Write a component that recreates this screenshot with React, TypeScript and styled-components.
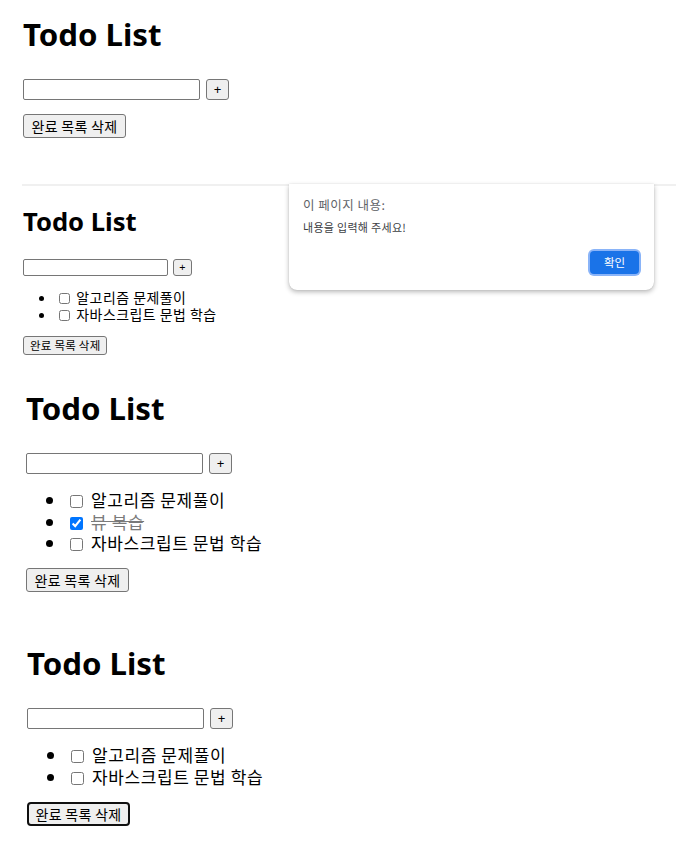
import React from "react";
import styled, { createGlobalStyle, css } from "styled-components";

const Global = createGlobalStyle`
  html, body { margin: 0; padding: 0; background: #ffffff; }
  body {
    font-family: "Noto Sans", "Noto Sans CJK KR", sans-serif;
    color: #000000;
    width: 676px;
    height: 844px;
    overflow: hidden;
  }
`;

type Scaled = { $s: number };
const px = (v: number, s: number) => `${(v * s).toFixed(2)}px`;

const Page = styled.div`
  display: flex;
  flex-direction: column;
  width: 676px;
  height: 844px;
  overflow: hidden;
`;

const Shot = styled.section<{ $h: number; $pt: number; $pl: number; $line?: boolean }>`
  position: relative;
  flex: none;
  box-sizing: border-box;
  height: ${(p) => p.$h}px;
  padding: ${(p) => p.$pt}px 0 0 ${(p) => p.$pl}px;
  ${(p) =>
    p.$line &&
    css`
      margin-left: 22px;
      border-top: 2px solid #f0f0f0;
    `}
`;

const Title = styled.h1<Scaled>`
  margin: 0;
  font-family: "Noto Sans", "Noto Sans CJK KR", sans-serif;
  font-weight: 700;
  font-size: ${(p) => px(31.2, p.$s)};
  line-height: ${(p) => px(40, p.$s)};
  color: #000000;
`;

const FormRow = styled.div<Scaled>`
  display: flex;
  align-items: center;
  gap: ${(p) => px(6, p.$s)};
  margin-top: ${(p) => px(25.4, p.$s)};
  height: ${(p) => px(21, p.$s)};
`;

const TextInput = styled.input<Scaled>`
  box-sizing: border-box;
  width: ${(p) => px(177, p.$s)};
  height: ${(p) => px(21, p.$s)};
  margin: 0;
  padding: 0 2px;
  border: 1px solid #767676;
  border-radius: 2px;
  background: #ffffff;
  outline: none;
`;

const buttonBase = css`
  box-sizing: border-box;
  margin: 0;
  padding: 0;
  border: 1px solid #767676;
  border-radius: 3px;
  background: #efefef;
  color: #000000;
  font-family: "Noto Sans", "Noto Sans CJK KR", sans-serif;
  cursor: default;
`;

const AddButton = styled.button<Scaled>`
  ${buttonBase};
  width: ${(p) => px(23, p.$s)};
  height: ${(p) => px(21, p.$s)};
  font-size: ${(p) => px(13.33, p.$s)};
  line-height: 1;
`;

const List = styled.ul<Scaled>`
  margin: ${(p) => px(15.2, p.$s)} 0 0 0;
  padding-left: ${(p) => px(40, p.$s)};
  list-style: disc;
  font-family: "Noto Sans CJK KR", sans-serif;
  font-size: ${(p) => px(17, p.$s)};
  letter-spacing: ${(p) => px(0.6, p.$s)};
  line-height: ${(p) => px(21.5, p.$s)};
`;

const Item = styled.li`
  white-space: nowrap;
`;

const Check = styled.input<Scaled>`
  width: ${(p) => px(13, p.$s)};
  height: ${(p) => px(13, p.$s)};
  margin: 0 ${(p) => px(8, p.$s)} 0 ${(p) => px(4, p.$s)};
  vertical-align: ${(p) => px(-1, p.$s)};
  accent-color: #0075ff;
`;

const ItemText = styled.span<{ $done?: boolean }>`
  color: ${(p) => (p.$done ? "#7a7a7a" : "#000000")};
  text-decoration: ${(p) => (p.$done ? "line-through" : "none")};
`;

const DeleteButton = styled.button<Scaled & { $focused?: boolean }>`
  ${buttonBase};
  display: block;
  margin-top: ${(p) => px(14.4, p.$s)};
  width: ${(p) => px(103, p.$s)};
  height: ${(p) => px(24, p.$s)};
  font-family: "Noto Sans CJK KR", sans-serif;
  font-size: ${(p) => px(14, p.$s)};
  letter-spacing: ${(p) => px(0.3, p.$s)};
  line-height: 1;
  ${(p) =>
    p.$focused &&
    css`
      border: 2px solid #101010;
      border-radius: 4px;
    `}
`;

const Dialog = styled.div`
  position: absolute;
  top: -2px;
  left: 267px;
  width: 365px;
  height: 106px;
  box-sizing: border-box;
  display: flex;
  flex-direction: column;
  padding: 12px 13px 14px 14px;
  background: #ffffff;
  border-radius: 0 0 8px 8px;
  box-shadow: 0 2px 5px rgba(0, 0, 0, 0.28), 0 0 1px rgba(0, 0, 0, 0.2);
  font-family: "Noto Sans CJK KR", sans-serif;
`;

const DialogTitle = styled.div`
  font-size: 12.5px;
  letter-spacing: 0.5px;
  line-height: 17px;
  color: #5f6368;
`;

const DialogMessage = styled.div`
  margin-top: 7px;
  font-size: 11px;
  letter-spacing: 0.3px;
  line-height: 15px;
  color: #3c4043;
`;

const OkButton = styled.button`
  align-self: flex-end;
  margin: auto 2px 2px 0;
  box-sizing: border-box;
  width: 49px;
  height: 23px;
  padding: 0;
  border: none;
  border-radius: 4px;
  background: #1a73e8;
  box-shadow: 0 0 0 2px #8ab4f8;
  color: #ffffff;
  font-family: "Noto Sans CJK KR", sans-serif;
  font-size: 11.5px;
  line-height: 1;
`;

type Todo = { text: string; done?: boolean };

function TodoApp({ s, items, focused }: { s: number; items?: Todo[]; focused?: boolean }) {
  return (
    <>
      <Title $s={s}>Todo List</Title>
      <FormRow $s={s}>
        <TextInput $s={s} type="text" defaultValue="" />
        <AddButton $s={s}>+</AddButton>
      </FormRow>
      {items && items.length > 0 && (
        <List $s={s}>
          {items.map((t) => (
            <Item key={t.text}>
              <Check $s={s} type="checkbox" defaultChecked={!!t.done} />
              <ItemText $done={t.done}>{t.text}</ItemText>
            </Item>
          ))}
        </List>
      )}
      <DeleteButton $s={s} $focused={focused}>
        완료 목록 삭제
      </DeleteButton>
    </>
  );
}

const twoItems: Todo[] = [{ text: "알고리즘 문제풀이" }, { text: "자바스크립트 문법 학습" }];
const threeItems: Todo[] = [
  { text: "알고리즘 문제풀이" },
  { text: "뷰 복습", done: true },
  { text: "자바스크립트 문법 학습" },
];

export default function App() {
  return (
    <Page>
      <Global />
      <Shot $h={184} $pt={13.6} $pl={23}>
        <TodoApp s={1} />
      </Shot>
      <Shot $h={176} $pt={19.4} $pl={1} $line>
        <TodoApp s={0.82} items={twoItems} />
        <Dialog>
          <DialogTitle>이 페이지 내용:</DialogTitle>
          <DialogMessage>내용을 입력해 주세요!</DialogMessage>
          <OkButton>확인</OkButton>
        </Dialog>
      </Shot>
      <Shot $h={260} $pt={27.6} $pl={26}>
        <TodoApp s={1} items={threeItems} />
      </Shot>
      <Shot $h={224} $pt={22.6} $pl={27}>
        <TodoApp s={1} items={twoItems} focused />
      </Shot>
    </Page>
  );
}
